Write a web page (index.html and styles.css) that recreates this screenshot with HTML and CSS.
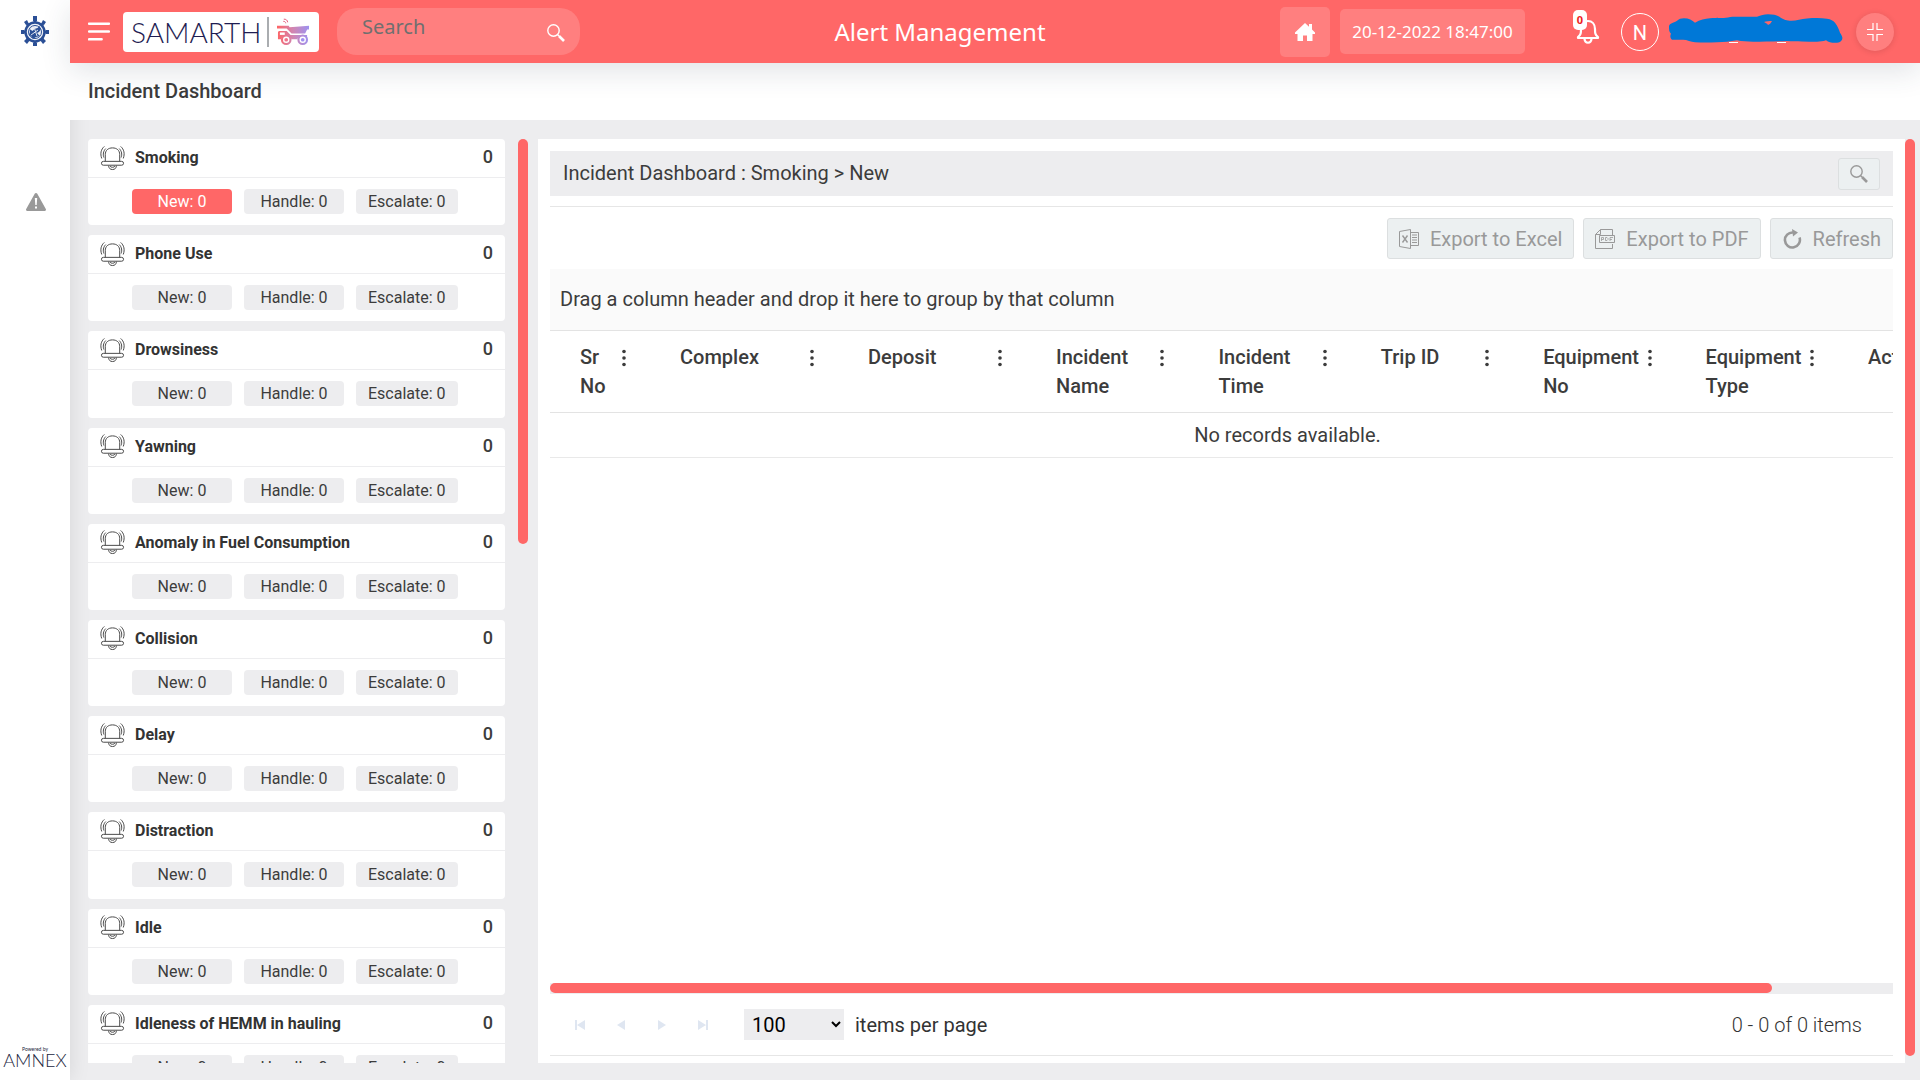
FILE: index.html
```html
<!DOCTYPE html>
<html lang="en">
<head>
<meta charset="utf-8">
<title>Alert Management</title>
<link rel="stylesheet" href="styles.css">
</head>
<body>
<svg class="defs" aria-hidden="true">
  <symbol id="alarm" viewBox="0 0 26 26">
    <g fill="none" stroke="#444" stroke-width="1">
      <path d="M5.500 16.500v-7C5.500 5 8.500 2.500 13 2.500s7.500 2.500 7.500 7v7"/>
      <rect x="1.500" y="16.500" width="23" height="4" rx="2"/>
      <path d="M9 21c0 2.500 1.500 4 4 4s4-1.500 4-4"/>
      <path d="M10.500 21.500c.5 1.500 4.500 1.500 5 0"/>
      <path d="M4.500 1C1 4 0 8.500 1.800 13.500M6 3.200C3.200 6 3 9.500 4 12.500M21.500 1c3.500 3 4.500 7.500 2.700 12.500M20 3.200c2.800 2.800 3 6.300 2 9.300"/>
    </g>
  </symbol>
  <symbol id="lens" viewBox="0 0 18 18">
    <circle cx="6.500" cy="6.500" r="5.700" fill="none" stroke="currentColor" stroke-width="1.400"/>
    <path d="M10.500 10.500l1.500 1.500" stroke="currentColor" stroke-width="1.500"/>
    <path d="M12 12l5 5" stroke="currentColor" stroke-width="2.600"/>
  </symbol>
  <symbol id="dots" viewBox="0 0 6 18">
    <circle cx="3" cy="2.500" r="1.800"/><circle cx="3" cy="9" r="1.800"/><circle cx="3" cy="15.500" r="1.800"/>
  </symbol>
</svg>
<div class="app">
  <aside class="sidebar">
    <svg class="emblem" viewBox="0 0 28 32" aria-label="Emblem" role="img">
      <g fill="none" stroke="#2b4f96">
        <path d="M14 3v26M3 17h22M6 9l16 16M22 9L6 25" stroke-width="3"/>
        <circle cx="14" cy="17" r="9.500" stroke-width="2.500" fill="#eef1f7"/>
        <circle cx="14" cy="17" r="6.500" stroke-width="1"/>
      </g>
      <g fill="#2b4f96">
        <path d="M12 1h4v5h-4zM12 28h4v3h-4zM0 15h3v4H0zM25 15h3v4h-3zM3 7l3-2 2 4-3 1zM25 7l-3-2-2 4 3 1zM3 26l3 3 3-4-3-2zM25 26l-3 3-3-4 3-2z"/>
        <path d="M8.500 14l3 2 2-2 3-1 2-2 1.500 3-2 3-2 1 3 3-4 1-3 2-2-3-2-1 1-3z"/>
      </g>
      <path d="M10 20l7-5M13 12l3 9" stroke="#dfe5f1"/>
    </svg>
    <a class="nav-alert" href="#" aria-label="Alerts">
      <svg viewBox="0 0 20 18"><path d="M10 0c.6 0 1 .3 1.300.8l8.500 15.300c.5.900 0 1.900-1 1.900H1.200c-1 0-1.500-1-1-1.900L8.700.8C9 .3 9.400 0 10 0z" fill="#999"/><path d="M8.800 5h2.400l-.5 7H9.300zM9 13.500h2v2H9z" fill="#fff"/></svg>
    </a>
    <div class="powered"><span>Powered by</span><strong>AMNEX</strong></div>
  </aside>
  <div class="main">
    <header class="topbar">
      <button class="menu" aria-label="Menu"><svg viewBox="0 0 21 18"><path d="M1 1.500h19M1 9h19M1 16.500h12" stroke="#fff" stroke-width="2.400" stroke-linecap="round"/></svg></button>
      <div class="brand">
        <span class="brand-name">SAMARTH</span>
        <svg viewBox="0 0 34 28" aria-hidden="true">
          <defs><linearGradient id="truck" gradientUnits="userSpaceOnUse" x1="0" y1="0" x2="34" y2="0"><stop offset="0" stop-color="#ff6464"/><stop offset=".5" stop-color="#cf86b4"/><stop offset="1" stop-color="#9a92f4"/></linearGradient></defs>
          <g fill="url(#truck)">
            <path d="M0 7.500h12l1 1.500 20-1.500v4h-2l-2 4-14 0-5-5H0zM1 14l1-1h8l4 4h17v4.500h-1c-1-4-8-4-9 0h-6c-1-4-10-4-11 0H1z"/>
          </g>
          <g fill="#fff" stroke="url(#truck)" stroke-width="2.200"><circle cx="9.500" cy="22" r="4.400"/><circle cx="26.500" cy="22" r="4.400"/></g>
          <circle cx="9.500" cy="22" r="1.900" fill="#f1738a"/><circle cx="26.500" cy="22" r="1.900" fill="#a08ff0"/>
          <path d="M3 14.500h5v2.500H3z" fill="#fff"/><path d="M7 .8c2-.3 4 1.200 4 3.200M6.500 3c1.500 0 2.500.7 2.500 2" fill="none" stroke="#e5587a"/>
        </svg>
      </div>
      <form class="search">
        <input type="search" placeholder="Search" aria-label="Search">
        <button type="button" aria-label="Run search"><svg><use href="#lens"/></svg></button>
      </form>
      <h1 class="app-title">Alert Management</h1>
      <a class="home" href="#" aria-label="Home"><svg viewBox="0 0 20 18"><path d="M10 0l4 3.700V1h3v5.500L20 9.500V11h-2.500v7H12v-5.500H8V18H2.500v-7H0V9.500z" fill="#fff"/></svg></a>
      <time class="clock">20-12-2022 18:47:00</time>
      <button class="bell" aria-label="Notifications">
        <svg viewBox="0 0 24 26"><path d="M2 18c3-2.500 3-4 3-8 0-5 3-8 7-8s7 3 7 8c0 4 0 5.500 3 8v1H2zM8.500 20c.5 5 6.500 5 7 0" fill="none" stroke="#fff" stroke-width="2.200" stroke-linejoin="round"/></svg>
        <span class="badge">0</span>
      </button>
      <span class="avatar">N</span>
      <div class="user">
        <span class="mark"></span><span class="mark"></span>
        <svg viewBox="0 0 174 29" aria-hidden="true"><path d="M0 12C1 9 4 9 7.700 7 10 5 12 4.300 15 4.300c5 0 8 2 11 4.400C31 6 36 4.500 41 4.300c8-.6 12 0 18-.8 3-.8 6-.8 9-.8h20C92 1.500 95 .3 99 .3c5 0 8 .7 11 2.200 3 2 5 3.500 9 4 7 1 12-1.500 19-2 7-.5 14-.6 20 .2 4 .5 6 2 8 4 3 4 4 7 5 10 2 3 3 5 2 7-1 2-3 3-5 3-4 .3-8 0-11-2.400-3 1-6 1.400-9 1.400-10 0-20 0-30-.7-11 .5-23 .7-34 .7-6 0-11-.4-16-1.400-7 1-13 2-20 2-8 .3-15 .3-22 0-4-.3-8-2.600-12-2.600H3c-2-2-2-4-1-6-2-2-2-4-2-7z" fill="#0078d7"/><path d="M95 8c2-1 6-1 8-1-1 2-2 3-4 4-1-2-3-2-4-3z" fill="#ff6767"/></svg>
      </div>
      <button class="fullscreen" aria-label="Exit full screen"><svg viewBox="0 0 18 18"><path d="M7 0v6.500H1M11 0v6.500h6M7 18v-6.500H1M11 18v-6.500h6" fill="none" stroke="#fff" stroke-width="1.200"/></svg></button>
    </header>
    <h2 class="page-title">Incident Dashboard</h2>
    <main class="content">
      <section class="list" aria-label="Incidents">
        <div class="cards">
          <article class="card"><header><svg><use href="#alarm"/></svg><h3>Smoking</h3><b>0</b></header><div class="states"><button class="active">New: 0</button><button>Handle: 0</button><button>Escalate: 0</button></div></article>
          <article class="card"><header><svg><use href="#alarm"/></svg><h3>Phone Use</h3><b>0</b></header><div class="states"><button>New: 0</button><button>Handle: 0</button><button>Escalate: 0</button></div></article>
          <article class="card"><header><svg><use href="#alarm"/></svg><h3>Drowsiness</h3><b>0</b></header><div class="states"><button>New: 0</button><button>Handle: 0</button><button>Escalate: 0</button></div></article>
          <article class="card"><header><svg><use href="#alarm"/></svg><h3>Yawning</h3><b>0</b></header><div class="states"><button>New: 0</button><button>Handle: 0</button><button>Escalate: 0</button></div></article>
          <article class="card"><header><svg><use href="#alarm"/></svg><h3>Anomaly in Fuel Consumption</h3><b>0</b></header><div class="states"><button>New: 0</button><button>Handle: 0</button><button>Escalate: 0</button></div></article>
          <article class="card"><header><svg><use href="#alarm"/></svg><h3>Collision</h3><b>0</b></header><div class="states"><button>New: 0</button><button>Handle: 0</button><button>Escalate: 0</button></div></article>
          <article class="card"><header><svg><use href="#alarm"/></svg><h3>Delay</h3><b>0</b></header><div class="states"><button>New: 0</button><button>Handle: 0</button><button>Escalate: 0</button></div></article>
          <article class="card"><header><svg><use href="#alarm"/></svg><h3>Distraction</h3><b>0</b></header><div class="states"><button>New: 0</button><button>Handle: 0</button><button>Escalate: 0</button></div></article>
          <article class="card"><header><svg><use href="#alarm"/></svg><h3>Idle</h3><b>0</b></header><div class="states"><button>New: 0</button><button>Handle: 0</button><button>Escalate: 0</button></div></article>
          <article class="card"><header><svg><use href="#alarm"/></svg><h3>Idleness of HEMM in hauling</h3><b>0</b></header><div class="states"><button>New: 0</button><button>Handle: 0</button><button>Escalate: 0</button></div></article>
        </div>
      </section>
      <div class="vscroll list-scroll"><div class="thumb"></div></div>
      <section class="panel">
        <div class="crumb"><span>Incident Dashboard : Smoking &gt; New</span><button class="tool" aria-label="Search incidents"><svg><use href="#lens"/></svg></button></div>
        <div class="actions">
          <button class="tool"><svg viewBox="0 0 20 20"><g fill="none" stroke="#999"><path d="M.5 2.500l11-2v19l-11-2z"/><path d="M12 3.500h7.500v13H12M13 6h5M13 8.500h5M13 11h5M13 13.500h5"/><path d="M3.500 6.500l5 7M8.500 6.500l-5 7" stroke-width="1.400"/></g></svg>Export to Excel</button>
          <button class="tool"><svg viewBox="0 0 20 20"><g fill="none" stroke="#999"><path d="M17.500 6V.5h-12l-5 5v14h17V15M.5 5.500h5v-5"/><path d="M4.500 6.500h15v7h-15z"/><path d="M6.500 12V8.500h2v2h-2M10.500 8.500v3h1.500l1-1v-1l-1-1zM15 12V8.500h3M15 10.500h2" stroke-width=".8"/></g></svg>Export to PDF</button>
          <button class="tool"><svg viewBox="0 0 20 20"><path d="M11 3.500a7.500 7.500 0 1 0 6.500 5" fill="none" stroke="#999" stroke-width="2.600"/><path d="M10 0l6 3.500-5 4z" fill="#999"/></svg>Refresh</button>
        </div>
        <div class="group-hint">Drag a column header and drop it here to group by that column</div>
        <div class="grid">
          <table>
            <colgroup><col class="c-sr"><col class="c-wide"><col class="c-wide"><col><col><col><col><col><col class="c-last"></colgroup>
            <thead><tr>
              <th><div>Sr No<svg><use href="#dots"/></svg></div></th>
              <th><div>Complex<svg><use href="#dots"/></svg></div></th>
              <th><div>Deposit<svg><use href="#dots"/></svg></div></th>
              <th><div>Incident Name<svg><use href="#dots"/></svg></div></th>
              <th><div>Incident Time<svg><use href="#dots"/></svg></div></th>
              <th><div>Trip ID<svg><use href="#dots"/></svg></div></th>
              <th><div>Equipment No<svg><use href="#dots"/></svg></div></th>
              <th><div>Equipment Type<svg><use href="#dots"/></svg></div></th>
              <th><div>Action</div></th>
            </tr></thead>
            <tbody><tr><td colspan="9">No records available.</td></tr></tbody>
          </table>
        </div>
        <div class="hscroll"><div class="thumb"></div></div>
        <footer class="pager">
          <button aria-label="First page"><svg viewBox="0 0 10 10"><path d="M0 0h2v10H0zM10 0v10L2 5z"/></svg></button>
          <button aria-label="Previous page"><svg viewBox="0 0 10 10"><path d="M9 0v10L1 5z"/></svg></button>
          <button aria-label="Next page"><svg viewBox="0 0 10 10"><path d="M1 0v10l8-5z"/></svg></button>
          <button aria-label="Last page"><svg viewBox="0 0 10 10"><path d="M8 0h2v10H8zM0 0v10l8-5z"/></svg></button>
          <select id="size"><option>100</option></select>
          <label for="size">items per page</label>
          <span class="range">0 - 0 of 0 items</span>
        </footer>
      </section>
      <div class="vscroll page-scroll"><div class="thumb"></div></div>
    </main>
  </div>
</div>
</body>
</html>
```
FILE: styles.css
```css
* { box-sizing: border-box; }
body { margin: 0; font-family: Roboto, sans-serif; font-size: 20px; color: #3c3c3c; background: #ededef; }
button, input, select { font: inherit; color: inherit; border: 0; margin: 0; padding: 0; background: none; }
h1, h2, h3 { margin: 0; }
svg { display: block; flex: none; }
.defs { display: none; }

.app { display: flex; height: 100vh; overflow: hidden; }
.sidebar { width: 70px; flex: none; display: flex; flex-direction: column; align-items: center; padding: 15px 0 12px; background: #fff; box-shadow: 0 0 20px rgba(0, 0, 0, .1); position: relative; z-index: 1; }
.emblem { width: 28px; height: 32px; }
.nav-alert { margin: 146px 0 0 2px; }
.nav-alert svg { width: 20px; height: 18px; }
.powered { margin-top: auto; display: flex; flex-direction: column; align-items: center; font-family: Lato, sans-serif; color: #222640; }
.powered span { font-size: 5px; line-height: 6px; }
.powered strong { font-size: 18px; line-height: 16px; font-weight: 300; }

.main { flex: 1; min-width: 0; display: flex; flex-direction: column; }
.topbar { height: 63px; flex: none; display: flex; align-items: center; padding: 0 26px 0 18px; background: #ff6767; box-shadow: 0 8px 30px rgba(40, 55, 80, .14); position: relative; z-index: 3; font-family: "Noto Sans", sans-serif; color: #fff; }
.menu svg { width: 22px; height: 19px; }
.brand { width: 196px; height: 40px; margin-left: 13px; padding: 0 8px; display: flex; align-items: center; background: #fff; border-radius: 4px; }
.brand-name { width: 138px; border-right: 2px solid #aaadb0; font: 300 28px/30px Lato, sans-serif; color: #1f1d52; }
.brand svg { width: 33px; height: 28px; margin-left: 8px; }
.search { width: 243px; height: 47px; margin-left: 18px; margin-right: 20px; padding: 0 15px 0 25px; display: flex; background: #ff7f7f; border-radius: 20px; }
.search input { flex: 1; min-width: 0; height: 36px; font-size: 20px; outline: 0; }
.search input::placeholder { color: #6f6f6f; opacity: 1; }
.search svg { width: 18px; height: 18px; margin-top: 2px; }
.app-title { flex: 1; text-align: center; font-size: 24px; font-weight: 400; }
.home { width: 50px; height: 50px; display: grid; place-items: center; background: #ff7f7f; border-radius: 5px; }
.home svg { width: 20px; height: 18px; }
.clock { width: 185px; height: 45px; margin: 0 47px 0 10px; line-height: 45px; text-align: center; font-size: 17px; background: #ff7f7f; border-radius: 5px; }
.bell { position: relative; padding: 0 1px 0 4px; }
.bell svg { width: 24px; height: 26px; }
.badge { position: absolute; left: 1px; top: -9px; width: 14px; height: 20px; border-radius: 5px; background: #fff; color: #e22; font: 700 11px/20px "Noto Sans", sans-serif; }
.avatar { width: 38px; height: 38px; margin: 0 9px 0 20px; border: 1px solid #fff; border-radius: 50%; text-align: center; font: 400 20px/38px Roboto, sans-serif; }
.user { position: relative; width: 176px; height: 36px; margin-right: 12px; display: flex; align-items: flex-end; gap: 39px; padding: 0 0 7px 61px; }
.user svg { position: absolute; left: 1px; top: 0; width: 174px; height: 29px; }
.mark { width: 9px; height: 1px; background: #fff; }
.fullscreen { width: 38px; height: 38px; display: grid; place-items: center; border-radius: 50%; background: #ff7f7f; box-shadow: 0 1px 6px rgba(0, 0, 0, .12); }
.fullscreen svg { width: 18px; height: 18px; }

.page-title { flex: none; height: 57px; padding: 0 18px; line-height: 56px; font-size: 20px; font-weight: 500; background: #fff; position: relative; z-index: 2; }

.content { flex: 1; min-height: 0; display: flex; padding: 19px 5px 17px 18px; }
.list { width: 417px; flex: none; overflow: hidden; }
.cards { display: grid; grid-auto-rows: 1fr; gap: 10px; min-height: 952px; }
.card { background: #fff; border-radius: 4px; }
.card header { height: 39px; padding: 0 12px 1px; display: flex; align-items: center; border-bottom: 1px solid #ededef; }
.card header svg { width: 25px; height: 26px; }
.card h3 { flex: 1; margin-left: 10px; font-size: 16px; font-weight: 700; color: #333; }
.card b { font-size: 18px; line-height: 36px; align-self: flex-start; font-weight: 500; }
.states { display: flex; gap: 12px; padding: 11px 0 0 44px; }
.states button { min-width: 100px; height: 25px; padding: 0 12px; border-radius: 4px; font-size: 16px; background: #ededef; }
.states .active { background: #ff6767; color: #fff; }

.vscroll { width: 10px; flex: none; }
.thumb { background: #ff6767; border-radius: 5px; }
.list-scroll { margin: 0 10px 0 13px; }
.list-scroll .thumb { height: 405px; }
.page-scroll .thumb { height: calc(100% - 7px); }

.panel { flex: 1; min-width: 0; display: flex; flex-direction: column; padding: 12px 12px 7px; background: #fff; }
.crumb { height: 45px; padding: 0 13px; line-height: 45px; display: flex; align-items: center; justify-content: space-between; background: #ededef; flex: none; }
.tool { display: flex; align-items: center; justify-content: center; gap: 11px; padding: 0 11px; height: 41px; background: #ecf0f1; border: 1px solid #dcdfe0; border-radius: 3px; color: #999; }
.tool svg { width: 20px; height: 20px; }
.crumb .tool { width: 42px; height: 32px; }
.crumb .tool svg { width: 18px; height: 18px; }
.actions { display: flex; justify-content: flex-end; gap: 9px; margin-top: 10px; padding: 11px 0 10px; border-top: 1px solid #e6e6e6; }
.group-hint { height: 62px; flex: none; padding: 0 10px; line-height: 60px; background: #fafafa; border-bottom: 1px solid #e3e3e3; }
.grid { flex: 1; min-height: 0; overflow: hidden; }
table { width: 1475px; table-layout: fixed; border-collapse: separate; border-spacing: 0; line-height: 29px; }
.c-sr { width: 100px; }
.c-wide { width: 188px; }
.c-last { width: 187px; }
th { height: 82px; padding: 12px 23px 11px 30px; vertical-align: top; text-align: left; font-weight: 500; border-bottom: 1px solid #e3e3e3; }
th div { display: flex; justify-content: space-between; }
th svg { width: 6px; height: 18px; margin-top: 6px; fill: #3c3c3c; }
td { height: 45px; padding: 8px 0 7px; text-align: center; border-bottom: 1px solid #e9e9e9; }
.hscroll { height: 11px; flex: none; background: #ededef; }
.hscroll .thumb { width: 91%; height: 10px; }
.pager { height: 62px; flex: none; display: flex; align-items: center; padding: 0 31px 0 9px; border-bottom: 1px solid #e6e6e6; color: #333; }
.pager button { width: 41px; height: 32px; display: grid; place-items: center; }
.pager button svg { width: 10px; height: 10px; fill: #dfe6f1; }
.pager select { width: 100px; height: 31px; margin: 0 11px 0 21px; padding-left: 4px; background: #ededef; color: #000; border-radius: 0; }
.range { margin-left: auto; font-weight: 300; }
```
